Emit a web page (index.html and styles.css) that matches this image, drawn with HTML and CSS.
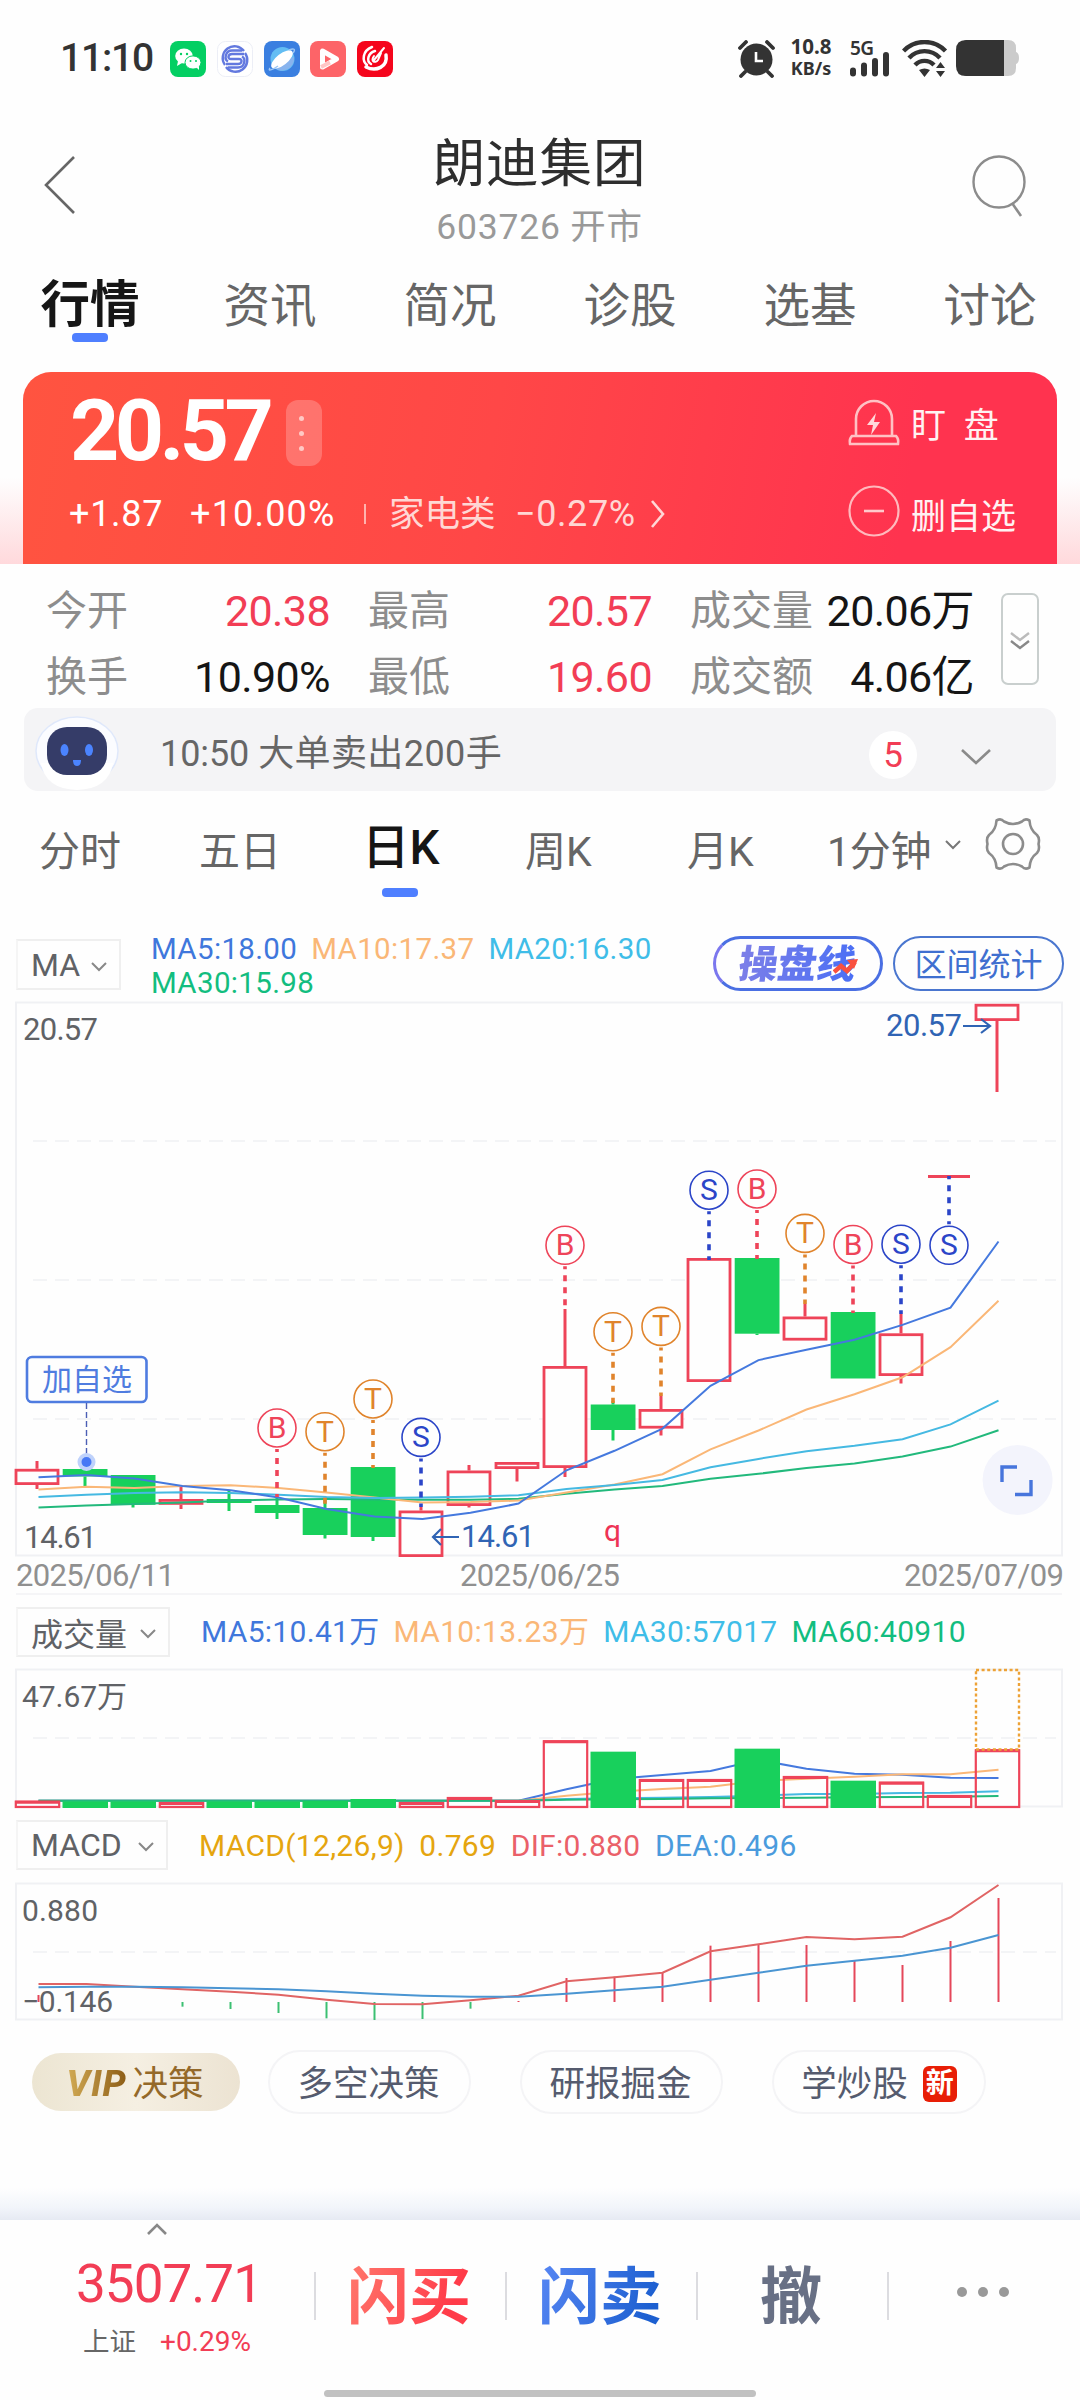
FILE: index.html
```html
<!DOCTYPE html>
<html lang="zh-CN">
<head>
<meta charset="utf-8">
<title>朗迪集团 603726</title>
<link rel="stylesheet" href="styles.css">
</head>
<body>
<header class="status">
  <span class="clock">11:10</span>
  <div class="apps">
    <svg class="app" viewBox="0 0 36 36"><rect width="36" height="36" rx="8" fill="#04cf63"/><ellipse cx="14" cy="15" rx="8.8" ry="7.4" fill="#fff"/><path d="M8 20l-1 5 5-3z" fill="#fff"/><ellipse cx="23" cy="21.500" rx="8" ry="6.600" fill="#fff" stroke="#04cf63"/><path d="M26 26l3 3 0-4z" fill="#fff"/><g fill="#04cf63"><circle cx="11" cy="13" r="1.200"/><circle cx="17" cy="13" r="1.200"/><circle cx="20.500" cy="20" r="1"/><circle cx="26" cy="20" r="1"/></g></svg>
    <svg class="app" viewBox="0 0 36 36"><rect x=".5" y=".5" width="35" height="35" rx="8" fill="#fff" stroke="#eceef6"/><g fill="none" stroke="#6379df" stroke-width="2.400"><path d="M8 24a11.500 11.500 0 0 1 19-14M28 12a11.500 11.500 0 0 1-19 14"/><path d="M27 13H15c-4 0-5 5-1 5h8c4 0 3 5-1 5H9"/><path d="M25 9.500H15c-7 0-8 9-4 11M11 26.500h10c7 0 8-9 4-11"/></g></svg>
    <svg class="app" viewBox="0 0 36 36"><rect width="36" height="36" rx="8" fill="#3a7fe0"/><circle cx="18.500" cy="18" r="12" fill="#63bdf3"/><path d="M8 24a12 12 0 0 0 22-8z" fill="#88b4ee"/><ellipse cx="18" cy="18.500" rx="13" ry="5.600" transform="rotate(-38 18 18.500)" fill="#fff"/><path d="M6 27c-3 4 4 1 8-2M25 9c5-2 7-1 4 3" fill="none" stroke="#9cc7f5" stroke-width="1.500"/></svg>
    <svg class="app" viewBox="0 0 36 36"><rect width="36" height="36" rx="8" fill="#fd6468"/><path d="M12.500 10v16l14-8z" fill="none" stroke="#fff" stroke-width="5" stroke-linejoin="round"/><path d="M11 26l9-4.500" stroke="#ffc5c5" stroke-width="4"/></svg>
    <svg class="app" viewBox="0 0 36 36"><rect width="36" height="36" rx="8" fill="#f5051c"/><g fill="none" stroke="#fff" stroke-linecap="round"><path d="M15 6C5 10 5 20 10 24" stroke-width="2.500"/><path d="M18 10c-7 2-9 10-4 13" stroke-width="2.500"/><path d="M29 14c2 12-10 17-20 12" stroke-width="3.500"/><path d="M27 7L17 19M17 15c-4 5 1 8 4 4l3-7" stroke-width="2"/></g></svg>
  </div>
  <svg class="alarm" viewBox="0 0 38 38"><circle cx="18.500" cy="19.500" r="16" fill="#333"/><path d="M2 8l6-6M35 8l-6-6M7 32l-4 4M30 32l4 4" stroke="#333" stroke-width="3.800" stroke-linecap="round"/><path d="M18 12v9h7" fill="none" stroke="#fff" stroke-width="2.600"/></svg>
  <div class="speed"><span>10.8</span><span>KB/s</span></div>
  <div class="cell">
    <span>5G</span>
    <svg viewBox="0 0 42 26"><g stroke="#333" stroke-width="6" stroke-linecap="round"><path d="M4 19.500v3M15 14.500v8M26 10v12.500M37 4v18.500"/></g></svg>
  </div>
  <svg class="wifi" viewBox="0 0 46 38"><g fill="none" stroke="#333" stroke-width="4.400"><path d="M1.500 11a29 29 0 0 1 42 0"/><path d="M7 18a21 21 0 0 1 31 0"/><path d="M13 25a13 13 0 0 1 19 0"/></g><path d="M17 30q5.500-3 11 0l-5.500 7zM34 28l4.500-6 4.500 6zM34 31l4.500 6 4.500-6z" fill="#333"/></svg>
  <svg class="battery" viewBox="0 0 64 36"><path d="M8 0h44q8 0 8 8v4q3 1 3 6t-3 6v4q0 8-8 8H8z" fill="#cbcbcb"/><path d="M48 0H10Q0 0 0 10v16q0 10 10 10h38z" fill="#333"/></svg>
</header>

<nav class="titlebar">
  <svg class="back" viewBox="0 0 34 62"><path d="M31 3L3 31l28 28" fill="none" stroke="#666" stroke-width="2.600"/></svg>
  <div class="name"><h1>朗迪集团</h1><p>603726 开市</p></div>
  <svg class="search" viewBox="0 0 56 66"><circle cx="28" cy="28" r="25.500" fill="none" stroke="#8c8c8c" stroke-width="2.400"/><path d="M41 49l9 13" stroke="#8c8c8c" stroke-width="2.600"/></svg>
</nav>

<nav class="tabs">
  <a class="on">行情</a><a>资讯</a><a>简况</a><a>诊股</a><a>选基</a><a>讨论</a>
</nav>

<section class="glow">
  <div class="quote">
    <div class="q-left">
      <div class="q-price"><b>20.57</b><i class="more"><u></u><u></u><u></u></i></div>
      <div class="q-sub">
        <span class="chg">+1.87</span><span class="pct">+10.00%</span><em></em><span class="sector">家电类</span><span class="sector-pct">−0.27%</span>
        <svg viewBox="0 0 16 30"><path d="M2 2l11 13L2 28" fill="none" stroke="#ffd7d6" stroke-width="2.600"/></svg>
      </div>
    </div>
    <div class="q-right">
      <div class="act watch"><svg viewBox="0 0 54 54"><g fill="none" stroke="#ffc1c4" stroke-width="2.600"><path d="M9 39V22a18 18 0 0 1 36 0v17"/><path d="M5 39h44q3 3 2 8H3q-1-5 2-8z"/></g><path d="M29 16l-9 12h6l-2 10 9-13h-6z" fill="#ffd9da"/></svg><span>盯&ensp;盘</span></div>
      <div class="act drop"><svg viewBox="0 0 54 54"><circle cx="27" cy="27" r="24.500" fill="none" stroke="#ffb9bd" stroke-width="2.200"/><path d="M17 27h20" stroke="#ffc9cb" stroke-width="2.600"/></svg><span>删自选</span></div>
    </div>
  </div>
</section>

<section class="stats">
  <dl class="cells">
    <dt>今开</dt><dd class="up">20.38</dd><dt>最高</dt><dd class="up">20.57</dd><dt>成交量</dt><dd>20.06万</dd>
    <dt>换手</dt><dd>10.90%</dd><dt>最低</dt><dd class="up">19.60</dd><dt>成交额</dt><dd>4.06亿</dd>
  </dl>
  <div class="expand"><svg viewBox="0 0 20 20"><path d="M1 2l9 7 9-7" fill="none" stroke="#bbb" stroke-width="2.400"/><path d="M1 10l9 7 9-7" fill="none" stroke="#888" stroke-width="2.400"/></svg></div>
</section>

<section class="notice">
  <svg class="robot" viewBox="0 0 88 80"><ellipse cx="44" cy="38" rx="41" ry="34" fill="#fbfcff" stroke="#dfe8fb" stroke-width="1.500"/><path d="M8 50q4 26 36 27 32-1 36-27z" fill="#fff"/><rect x="14" y="14" width="60" height="48" rx="20" fill="#353c68"/><ellipse cx="31.500" cy="37" rx="4" ry="6" fill="#4b84ff"/><ellipse cx="56" cy="37" rx="4" ry="6" fill="#4b84ff"/><path d="M40 47h8q0 6-4 6t-4-6z" fill="#4b84ff"/></svg>
  <p>10:50<span>大单卖出200手</span></p>
  <b>5</b>
  <svg class="down" viewBox="0 0 32 18"><path d="M2 2l14 13L30 2" fill="none" stroke="#8a8a8a" stroke-width="2.600"/></svg>
</section>

<nav class="periods">
  <a>分时</a><a>五日</a><a class="on">日K</a><a>周K</a><a>月K</a><a>1分钟</a>
  <svg class="tiny" viewBox="0 0 16 10"><path d="M1 1l7 7 7-7" fill="none" stroke="#777" stroke-width="2"/></svg>
  <svg class="gear" viewBox="-28 -28 56 56"><path d="M-16.500-23.500Q-12-26-9-22.500 0-17.500 9-22.500 12-26 16.500-23.500 17-14 24-9 27-6 25.500 0 27 6 24 9 17 14 16.500 23.500 12 26 9 22.500 0 17.500-9 22.500-12 26-16.500 23.500-17 14-24 9-27 6-25.500 0-27-6-24-9-17-14-16.500-23.500z" fill="none" stroke="#8c8c8c" stroke-width="2.600" stroke-linejoin="round"/><circle r="10" fill="none" stroke="#8c8c8c" stroke-width="2.600"/></svg>
</nav>

<section class="legend main-legend">
  <div class="pick"><span>MA</span><svg viewBox="0 0 16 10"><path d="M1 1l7 7 7-7" fill="none" stroke="#888" stroke-width="2"/></svg></div>
  <div class="vals"><span class="blue">MA5:18.00</span><span class="orange">MA10:17.37</span><span class="cyan">MA20:16.30</span><span class="green">MA30:15.98</span></div>
  <div class="pill trade"><b>操盘线</b><svg viewBox="0 0 26 18"><path d="M1 14l7-6 6 5 8-9" fill="none" stroke="#f9503f" stroke-width="4.500"/><path d="M14 2l11-1-4 10z" fill="#f9503f"/></svg></div>
  <div class="pill range">区间统计</div>
</section>
<svg class="chart" id="kline" width="1080" height="597" viewBox="0 1000 1080 597"></svg>

<section class="legend vol-legend">
  <div class="pick"><span>成交量</span><svg viewBox="0 0 16 10"><path d="M1 1l7 7 7-7" fill="none" stroke="#888" stroke-width="2"/></svg></div>
  <div class="vals"><span class="blue">MA5:10.41万</span><span class="orange">MA10:13.23万</span><span class="cyan">MA30:57017</span><span class="green">MA60:40910</span></div>
</section>
<svg class="chart" id="volume" width="1080" height="146" viewBox="0 1666 1080 146"></svg>

<section class="legend macd-legend">
  <div class="pick"><span>MACD</span><svg viewBox="0 0 16 10"><path d="M1 1l7 7 7-7" fill="none" stroke="#888" stroke-width="2"/></svg></div>
  <div class="vals"><span class="gold">MACD(12,26,9)</span><span class="gold num">0.769</span><span class="rose">DIF:0.880</span><span class="sky">DEA:0.496</span></div>
</section>
<svg class="chart" id="macd" width="1080" height="144" viewBox="0 1880 1080 144"></svg>

<nav class="chips">
  <a class="vip"><b>VIP</b><span>决策</span></a><a>多空决策</a><a>研报掘金</a><a class="learn">学炒股<i>新</i></a>
</nav>

<div class="shade"></div>
<footer class="dock">
  <div class="index">
    <svg viewBox="0 0 20 12"><path d="M1 11l9-9 9 9" fill="none" stroke="#888" stroke-width="2.600"/></svg>
    <strong>3507.71</strong>
    <p><span>上证</span><em>+0.29%</em></p>
  </div>
  <a class="buy">闪买</a><a class="sell">闪卖</a><a class="undo">撤</a>
  <a class="dots"><i></i><i></i><i></i></a>
</footer>
<div class="home"></div>
<script src="charts.js"></script>
</body>
</html>
```
FILE: styles.css
```css
* { box-sizing: border-box; margin: 0; padding: 0; }
body { width: 1080px; height: 2400px; background: #fefefe; color: #222; overflow: hidden;
  font-family: Roboto, "Noto Sans CJK SC", sans-serif; }
svg { display: block; flex: none; }
i, em { font-style: normal; }
a, span, b { white-space: nowrap; }

.status { display: flex; align-items: flex-start; height: 116px; padding: 40px 0 0 60px; color: #333; }
.clock { width: 110px; font-size: 39px; line-height: 37px; font-weight: 500; letter-spacing: -1.200px; }
.apps { display: flex; gap: 10.800px; width: 568px; padding-top: 1px; }
.app { width: 36px; height: 36px; }
.alarm { width: 38px; height: 38px; }
.speed { width: 60px; margin-left: 5px; margin-top: -5px; display: flex; flex-direction: column; align-items: center; font: 700 20.500px/22px "Noto Sans", sans-serif; }
.speed span + span { font-size: 18px; line-height: 20px; margin-top: 1px; }
.cell { width: 44px; margin-left: 8px; font: 600 19px/16px "Noto Sans", sans-serif; }
.cell span { display: block; height: 11px; padding-left: 1px; letter-spacing: -.5px; }
.cell svg { width: 42px; height: 26px; }
.wifi { width: 46px; height: 38px; margin-left: 9px; }
.battery { width: 64px; height: 36px; margin-left: 8px; }

.titlebar { display: flex; height: 139px; padding: 0 53px 0 43px; justify-content: space-between; }
.back { width: 34px; height: 62px; margin-top: 38px; }
.name { text-align: center; padding-left: 31px; }
.name h1 { font-size: 52.500px; line-height: 60px; font-weight: 400; color: #2e2e2e; margin-top: 18px; letter-spacing: .9px; }
.name p { font-size: 35.500px; line-height: 40px; color: #999; margin-top: 13px; letter-spacing: .8px; }
.search { width: 56px; height: 66px; margin-top: 38px; }

.tabs { display: grid; grid-template-columns: repeat(6, 180px); height: 117px; text-align: center; }
.tabs a { font-size: 46.500px; line-height: 102px; color: #666; }
.tabs .on { font-size: 49.500px; font-weight: 700; color: #161616; line-height: 101px; }
.tabs .on::after, .periods .on::after { content: ""; display: block; width: 36px; height: 9px; border-radius: 4px; background: #4f7fff; }
.tabs .on::after { margin: -23px auto 0; }

.glow { height: 192px; padding: 0 23px; background: linear-gradient(#fefefe 55%, #ffd9dc); }
.quote { height: 192px; border-radius: 28px 28px 0 0; padding: 0 34px 0 47px; color: #fff; display: flex; justify-content: space-between;
  background: linear-gradient(100deg, #ff5440, #ff4747 45%, #ff334f 85%); }
.q-price { display: flex; align-items: center; gap: 14px; height: 96px; padding-top: 17px; margin-bottom: 5px; }
.q-price b { font-size: 86px; line-height: 80px; width: 202px; font-weight: 700; letter-spacing: -4.600px; margin-top: 4px; }
.more { width: 36px; height: 66px; margin-top: 9px; border-radius: 12px; background: rgba(255,255,255,.22); display: flex; flex-direction: column; gap: 10px; align-items: center; justify-content: center; }
.more u { width: 5px; height: 5px; border-radius: 50%; background: #ffc9c5; margin-right: 5px; }
.q-sub { display: flex; align-items: center; height: 82px; font-size: 36px; line-height: 50px; }
.chg { width: 121px; letter-spacing: .7px; margin-left: -1px; }
.pct { width: 174px; letter-spacing: 1.200px; }
.q-sub em { width: 2px; height: 20px; background: #ffb3ae; margin-right: 23px; }
.sector { width: 126px; font-size: 35.500px; color: #ffd7d4; }
.sector-pct { width: 133px; color: #ffd7d4; letter-spacing: .6px; }
.q-sub svg { width: 16px; height: 30px; margin-left: 2px; }
.q-right { width: 176px; padding-top: 24px; }
.act { display: flex; align-items: center; gap: 10px; height: 56px; font-size: 35px; color: #fff2f2; }
.act svg { width: 54px; height: 54px; }
.watch span { line-height: 52px; word-spacing: 2px; padding-top: 5px; }
.drop { margin-top: 31px; }
.drop span { padding-top: 4px; }

.stats { display: flex; height: 144px; padding: 14px 41px 0 46px; justify-content: space-between; }
.cells { display: grid; width: 928px; height: 132px; grid-template-rows: 66px 66px;
  grid-template-columns: 100px 184px 138px 184px 162px 160px; }
.cells dt { font-size: 41px; line-height: 67px; color: #8d8d8d; white-space: nowrap; }
.cells dd { font-size: 43px; line-height: 66px; text-align: right; color: #151515; letter-spacing: -.6px; white-space: nowrap; }
.cells dt:nth-of-type(3n+2) { padding-left: 38px; }
.cells dt:nth-of-type(3n) { padding-left: 38px; }
.cells .up { color: #f23d55; }
.expand { width: 38px; height: 92px; margin-top: 15px; border: 2px solid #c9cfce; border-radius: 7px; display: flex; align-items: center; justify-content: center; }
.expand svg { width: 20px; height: 20px; margin-top: 4px; }

.notice { display: flex; align-items: center; height: 83px; margin: 0 24px; border-radius: 14px; background: #f4f4f6; color: #666; }
.robot { width: 88px; height: 80px; margin: 7px 39px 0 9px; }
.notice p { width: 709px; font-size: 36px; line-height: 50px; padding-top: 8px; letter-spacing: -.1px; }
.notice p span { font-size: 36px; padding-left: 9px; letter-spacing: .4px; }
.notice b { width: 48px; height: 48px; border-radius: 50%; background: #fff; color: #f23d55; text-align: center; font: 400 35px/50px Roboto, sans-serif; margin-top: 11px; }
.down { width: 32px; height: 18px; margin: 15px 0 0 43px; }

.periods { display: flex; height: 143px; padding-left: 39px; color: #666; font-size: 41px; line-height: 123px; }
.periods a:nth-child(1) { width: 160px; }
.periods a:nth-child(2) { width: 163px; }
.periods a:nth-child(3) { width: 163px; }
.periods a:nth-child(4) { width: 162px; }
.periods a:nth-child(5) { width: 140px; }
.periods a:nth-child(6) { width: 118px; letter-spacing: -.3px; }
.periods .on { font-size: 47.500px; font-weight: 500; color: #151515; line-height: 115px; }
.periods .on::after { margin: -18px 0 0 20px; }
.tiny { width: 16px; height: 10px; margin-top: 49px; }
.gear { width: 56px; height: 56px; margin: 25px 0 0 24px; }

.legend { display: flex; padding-left: 16px; font-size: 30px; }
.pick { display: flex; align-items: center; justify-content: space-between; height: 50px; border: 2px solid #efefef; border-left-color: #f5f5f5; padding: 0 12px 0 13px; color: #606266; font-size: 32px; }
.pick svg { width: 16px; height: 10px; margin-top: 4px; }
.vals { display: flex; white-space: nowrap; }
.blue { color: #3f77dc; } .orange { color: #fab777; } .cyan { color: #3fbde8; } .green { color: #12bd7f; }
.gold { color: #e5a50f; } .rose { color: #ea6069; } .sky { color: #4a9bdd; }
.main-legend { height: 66px; }
.main-legend .pick { width: 105px; margin-top: 5px; height: 51px; }
.main-legend .vals { width: 562px; margin-left: 30px; flex-wrap: wrap; align-content: flex-start; font-size: 29.500px; line-height: 34px; column-gap: 14px; margin-top: -2px; letter-spacing: .35px; }
.pill { height: 55px; margin-top: 2px; border-radius: 28px; display: flex; align-items: center; justify-content: center; color: #3f6fd0; }
.trade { width: 170px; border: 3.500px solid #4a6fe3; border-left-color: #7b77ee; position: relative; }
.trade b { font-size: 39px; line-height: 46px; font-weight: 900; transform: skewX(-8deg); background: linear-gradient(90deg, #7d7fe8, #4a6ff5); -webkit-background-clip: text; color: transparent; padding-top: 3px; }
.trade svg { position: absolute; right: 21px; bottom: 12px; width: 26px; height: 18px; }
.range { width: 171px; margin-left: 10px; border: 2px solid #4a76cf; font-size: 32px; line-height: 50px; padding-top: 2px; }
.chart { font-family: Roboto, "Noto Sans CJK SC", sans-serif; }
.vol-legend { height: 69px; padding-top: 10px; }
.vol-legend .pick { width: 154px; }
.vol-legend .vals { margin-left: 31px; gap: 14px; line-height: 50px; letter-spacing: .3px; }
.macd-legend { height: 68px; padding-top: 8px; }
.macd-legend .pick { width: 152px; }
.macd-legend .vals { margin-left: 31px; gap: 14.500px; line-height: 51px; letter-spacing: .3px; }

.chips { display: flex; height: 90px; padding: 26px 0 0 32px; align-items: center; color: #555b6e; font-size: 35.500px; line-height: 60px; }
.chips a { height: 64px; border-radius: 32px; border: 2px solid #f4f4f6; display: flex; align-items: center; justify-content: center; width: 203px; margin-right: 49px; padding: 3px 2px 0 0; }
.chips .vip { width: 208px; height: 58px; margin-right: 28px; border: 0; background: linear-gradient(90deg, #ece5d2, #f5efe2 50%, #ece3d2); color: #94692a; gap: 3px; }
.vip b { font-style: italic; font-weight: 800; font-size: 37px; letter-spacing: .8px; background: linear-gradient(90deg, #d2ab55, #8a5a14); -webkit-background-clip: text; color: transparent; padding-right: 3px; }
.chips .learn { width: 214px; gap: 15px; margin: 0; padding-right: 0; }
.learn i { width: 34px; height: 36px; border-radius: 6px; background: #e81e06; color: #fff; font-size: 28px; font-weight: 700; line-height: 35px; text-align: center; }

.shade { height: 32px; margin-top: 74px; background: linear-gradient(#fefefe, #f2f5fa 60%, #e6eaf3); }
.dock { display: flex; height: 170px; }
.index { width: 314px; height: 170px; display: flex; flex-direction: column; padding-left: 76px; }
.index svg { width: 20px; height: 12px; margin: 3px 0 0 71px; }
.index strong { font-size: 53px; line-height: 60px; margin-top: 19px; font-weight: 400; color: #f23d55; letter-spacing: -.950px; }
.index p { display: flex; gap: 24px; padding-left: 7px; font-size: 26.500px; line-height: 40px; margin-top: 8px; color: #666; }
.index em { color: #f23d55; letter-spacing: 0; font-size: 28px; }
.dock a { width: 191px; height: 100px; margin-top: 26px; font-size: 62px; font-weight: 700; line-height: 104px; text-align: center; background-clip: text; padding-right: 3px; }
.dock a::before { content: ""; float: left; width: 2px; height: 48px; margin-top: 26px; background: #dcdce0; }
.buy { background-image: linear-gradient(110deg, #ff8d78, #ff3b49 70%); color: transparent; }
.sell { background-image: linear-gradient(110deg, #6a93ff, #1c5fd0 75%); color: transparent; }
.undo { color: #687085; }
.dots { display: flex; align-items: center; gap: 11px; }
.dock .dots::before { margin: 0 57px 0 0; }
.dots i { width: 10px; height: 10px; border-radius: 50%; background: #999; margin-top: -9px; flex: none; }
.home { width: 432px; height: 7px; margin: 0 auto; border-radius: 4px; background: #c1c1c1; }
```
FILE: charts.js
```js
const RED = '#ee4459', GREEN = '#18d05c', BLUE = '#2b45c8', AMBER = '#e0842c';
const LINE = { ma5: '#4579de', ma10: '#fab777', ma20: '#45b9e2', ma30: '#22b97c' };
const cx = i => 37 + 48 * i;

const put = (svg, tag, attrs, text) => {
  const el = document.createElementNS('http://www.w3.org/2000/svg', tag);
  for (const k in attrs) el.setAttribute(k, attrs[k]);
  if (text) el.textContent = text;
  svg.appendChild(el);
};
const line = (svg, x1, y1, x2, y2, stroke, w = 2, dash = 'none') =>
  put(svg, 'line', { x1, y1, x2, y2, stroke, 'stroke-width': w, 'stroke-dasharray': dash });
const label = (svg, x, y, text, fill, width, size = 31) =>
  put(svg, 'text', { x, y, fill, 'font-size': size, textLength: width }, text);
const curve = (svg, ys, map, stroke, w = 2) =>
  put(svg, 'polyline', { points: ys.map((y, i) => (38.5 + 48 * i) + ',' + map(y).toFixed(1)).join(' '), fill: 'none', stroke, 'stroke-width': w });
const frame = (svg, top, bottom, grids) => {
  put(svg, 'rect', { x: 16, y: top, width: 1046, height: bottom - top, fill: 'none', stroke: '#f0f1f4', 'stroke-width': 2 });
  grids.forEach(y => line(svg, 33, y, 1056, y, '#f0f1f4', 1.5, '14 8'));
};

// Daily candles: [up, body top, body bottom, high, low]
const k = document.getElementById('kline');
frame(k, 1002.5, 1555.5, [1141, 1280, 1419]);
line(k, 16, 1594, 1062, 1594, '#f2f2f4', 1.5);
const candles = [
  [1, 1468.8, 1485, 1461, 1489], [0, 1469, 1476.5, 1465, 1486], [0, 1475, 1504.8, 1475, 1507.5],
  [1, 1499, 1504.8, 1485, 1509], [0, 1499, 1503, 1490, 1511], [0, 1505, 1513, 1497, 1519],
  [0, 1508, 1535, 1498, 1538.5], [0, 1467, 1537, 1467, 1541], [1, 1510.5, 1557, 1507, 1557],
  [1, 1470.5, 1506, 1465, 1507.5], [1, 1462, 1469, 1462, 1481.5], [1, 1366, 1468, 1309, 1477],
  [0, 1404.5, 1430, 1401, 1440.5], [1, 1409, 1428.6, 1396, 1435.5], [1, 1258, 1382, 1258, 1382],
  [0, 1258, 1333.7, 1258, 1335], [1, 1316.5, 1340.6, 1304, 1340], [0, 1312, 1378.5, 1312, 1378],
  [1, 1333.3, 1376, 1314, 1383.5], null, [1, 1003.8, 1021, 1004, 1092]];
candles.forEach((c, i) => {
  if (!c) return;
  const [up, t, b, hi, lo] = c, x = cx(i), col = up ? RED : GREEN;
  if (hi < t) line(k, x, hi, x, t, col, 3);
  if (lo > b) line(k, x, b, x, lo, col, 3);
  if (up) put(k, 'rect', { x: x - 21, y: t + 1.4, width: 42, height: b - t - 2.8, fill: '#fefefe', stroke: col, 'stroke-width': 2.8 });
  else put(k, 'rect', { x: x - 22.3, y: t, width: 44.8, height: b - t, fill: col });
});
line(k, 928, 1176.5, 970, 1176.5, RED, 3);

const ky = y => 1000 + y / 2.613;
curve(k, [1326,1321,1317,1313,1308,1305,1304,1305,1306,1306,1303,1290,1279,1270,1251,1238,1223,1211,1193,1167,1124], ky, LINE.ma30);
curve(k, [1279,1272,1275,1270,1268,1275,1287,1300,1313,1312,1308,1287,1266,1239,1174,1125,1070,1030,986,907,786], ky, LINE.ma10);
curve(k, [1299,1293,1288,1286,1288,1293,1299,1301,1300,1298,1294,1278,1267,1254,1221,1199,1179,1165,1148,1109,1047], ky, LINE.ma20);
curve(k, [1247,1241,1250,1270,1281,1300,1330,1350,1356,1340,1316,1229,1178,1120,1008,941,914,888,849,804,631], ky, LINE.ma5);

// Trade markers: [day, letter, circle centre, end of the dashed stem]
const tint = { B: RED, S: BLUE, T: AMBER };
[[5, 'B', 1428, 1497], [6, 'T', 1431.7, 1508], [7, 'T', 1399, 1468], [8, 'S', 1437.4, 1507], [11, 'B', 1245.3, 1309],
 [12, 'T', 1331.8, 1403], [13, 'T', 1326.4, 1396], [14, 'S', 1190.2, 1260], [15, 'B', 1189, 1259], [16, 'T', 1233.4, 1304],
 [17, 'B', 1244.5, 1313], [18, 'S', 1244.2, 1314], [19, 'S', 1245.3, 1176]].forEach(([i, t, y, end]) => {
  const x = cx(i), dir = end > y ? 1 : -1;
  line(k, x, y + 21 * dir, x, end, tint[t], 3.6, '3 6 6 6 6 6 6 6 6 6');
  put(k, 'circle', { cx: x, cy: y, r: 19, fill: '#fefefe', stroke: tint[t], 'stroke-width': 1.6 });
  put(k, 'text', { x, y: y + 10, fill: tint[t], 'font-size': 30, 'text-anchor': 'middle' }, t);
});

put(k, 'rect', { x: 27, y: 1357, width: 119.5, height: 45, rx: 5, fill: '#fefefe', stroke: '#4f7ce0', 'stroke-width': 2.6 });
label(k, 42, 1390, '加自选', '#4f7ce0', 90, 30);
line(k, 86.5, 1403, 86.5, 1456, '#4c5fb5', 1.4, '6 3');
put(k, 'circle', { cx: 86.5, cy: 1462, r: 9, fill: '#bfd2fb' });
put(k, 'circle', { cx: 86.5, cy: 1462, r: 5, fill: '#4678f5' });

label(k, 23, 1040, '20.57', '#606266', 75);
label(k, 24, 1548, '14.61', '#606266', 73);
label(k, 16, 1586, '2025/06/11', '#909090', 159);
label(k, 460, 1586, '2025/06/25', '#909090', 160);
label(k, 904, 1586, '2025/07/09', '#909090', 160);
label(k, 886, 1036, '20.57', '#3064b4', 76);
label(k, 461, 1547, '14.61', '#3064b4', 74);
label(k, 604, 1541, 'q', '#ee3355', 17, 30);
const arrow = d => put(k, 'path', { d, fill: 'none', stroke: '#3064b4', 'stroke-width': 2.2 });
arrow('M963 1026H990M981 1019l9 7-9 7');
arrow('M459 1537H433M441 1529l-8 8 8 8');

put(k, 'circle', { cx: 1017.6, cy: 1480, r: 35, fill: '#f3f4fc' });
put(k, 'path', { d: 'M1002 1482V1467H1017M1031 1480V1494.500H1015', fill: 'none', stroke: '#4775dc', 'stroke-width': 3.4 });

// Volume
const v = document.getElementById('volume');
frame(v, 1669.5, 1806.5, [1738]);
const vy = y => 1590 + y / 3, flat = n => Array(n).fill(632);
curve(v, [...flat(11),598,567,555,543,510,536,551,554,563,564], vy, LINE.ma5);
curve(v, [...flat(11),617,605,597,590,573,566,560,553,553,539], vy, LINE.ma10);
curve(v, [...flat(11),627,625,623,621,617,612,612,609,608,604], vy, LINE.ma20);
curve(v, [...flat(11),629,628,627,625,624,623,622,621,620,618], vy, LINE.ma30);
[[1,632],[0,634],[0,634],[1,636],[0,634],[0,634],[0,633],[0,627],[1,636],[1,621],[1,630],[1,451],[0,485],[1,567],[1,567],[0,476],[1,558],[0,572],[1,575],[1,615],[1,478]]
.forEach(([up, y], i) => {
  const t = vy(y), x = cx(i);
  if (up) {
    put(v, 'rect', { x: x - 21.2, y: t + 1, width: 43.4, height: 1807 - t - 1, fill: 'none', stroke: RED, 'stroke-width': 2.2 });
    line(v, x - 22, t + 1.5, x + 23, t + 1.5, RED, 3);
  } else put(v, 'rect', { x: x - 22.5, y: t, width: 45.5, height: 1808 - t, fill: GREEN });
});
put(v, 'rect', { x: 976, y: 1670, width: 43, height: 79.5, fill: 'none', stroke: '#eda236', 'stroke-width': 2.4, 'stroke-dasharray': '3 2.6' });
label(v, 22, 1707, '47.67万', '#606266', 105, 30);

// MACD
const m = document.getElementById('macd');
frame(m, 1883.5, 2019.5, [1952]);
[[0,1215],[3,1250],[4,1257],[5,1269],[6,1285],[7,1290],[8,1287],[9,1256],[10,1233],[11,1164],[12,1160],[13,1148],[14,1067],[15,1063],[16,1065],[17,1112],[18,1125],[19,1053],[20,924]]
.forEach(([i, y]) => line(m, 38.5 + 48 * i, vy(1236), 38.5 + 48 * i, vy(y), y > 1236 ? '#3cc072' : '#e5475a', 2));
curve(m, [1182,1182,1190,1198,1205,1214,1229,1242,1243,1231,1217,1174,1162,1148,1084,1063,1041,1048,1040,982,885], vy, '#e06464');
curve(m, [1192,1190,1190,1192,1195,1198,1204,1211,1217,1220,1220,1211,1201,1190,1169,1148,1127,1112,1097,1073,1035], vy, '#4a95d2');
label(m, 22, 1921, '0.880', '#606266', 76, 30);
label(m, 22, 2012, '−0.146', '#606266', 91, 30);
```
